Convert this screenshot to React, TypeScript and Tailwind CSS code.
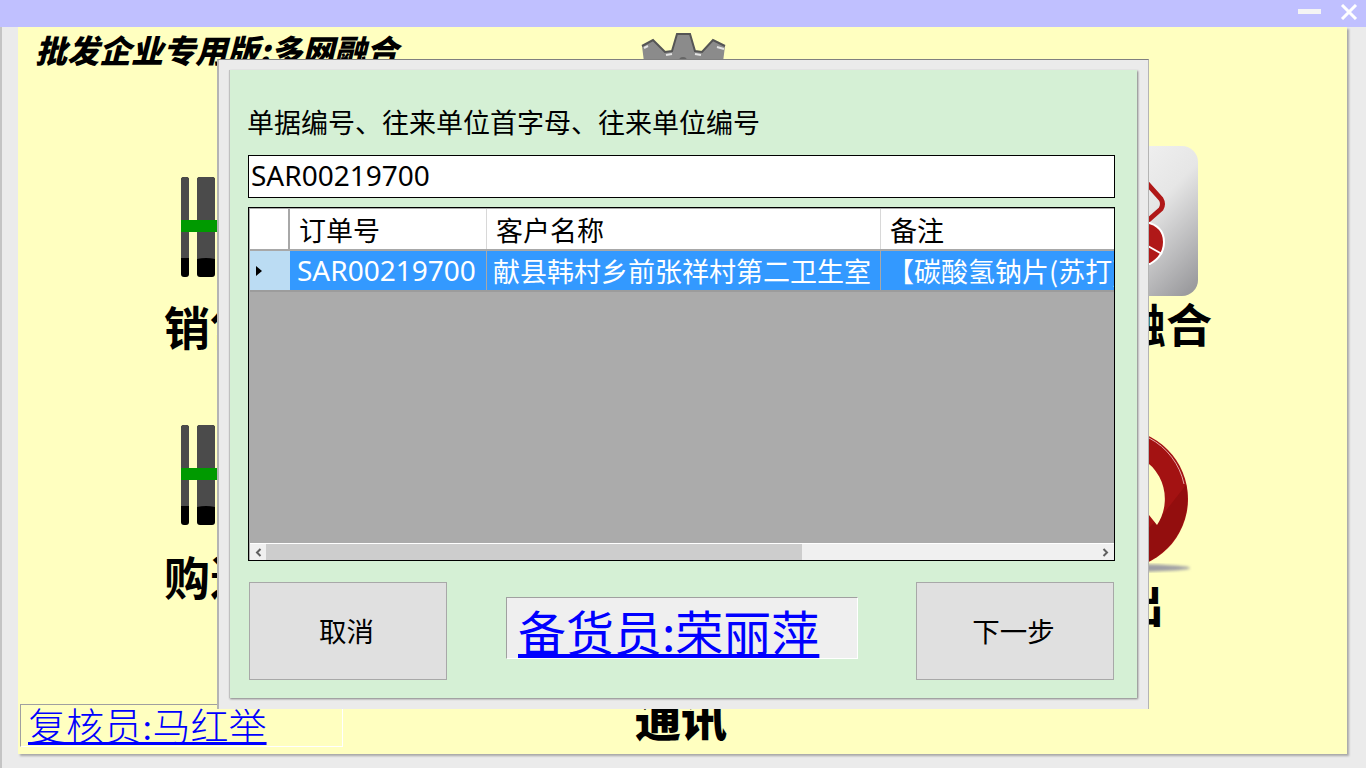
import React from "react";

const sans = { fontFamily: '"Noto Sans CJK SC", sans-serif' };
const latin = { fontFamily: '"Noto Sans", "Noto Sans CJK SC", sans-serif' };

function Bars() {
  return (
    <svg width="40" height="100" viewBox="0 0 40 100" className="block">
      <rect x="0" y="0" width="8" height="100" rx="3" fill="#000" />
      <rect x="16" y="0" width="18" height="100" rx="3" fill="#000" />
      <path d="M0 3a3 3 0 0 1 3-3h2a3 3 0 0 1 3 3v78H0z" fill="#4b4b4b" />
      <path d="M16 3a3 3 0 0 1 3-3h12a3 3 0 0 1 3 3v79q-9-2-18 0z" fill="#4b4b4b" />
      <rect x="0" y="43" width="40" height="12" fill="#009a00" />
    </svg>
  );
}

function Gear() {
  return (
    <svg width="90" height="30" viewBox="0 0 90 30" className="block">
      <path d="M2 14 L13 8 L25 20 L32 19 L37 2 L50 2 L55 19 L62 20 L73 8 L85 14 L83 30 L4 30 Z" fill="#8b8b8b" />
      <path d="M2 14 L13 8 L25 20 L32 19 L37 2 L50 2 L55 19 L62 20 L73 8 L85 14" fill="none" stroke="#555" strokeWidth="2" />
      <path d="M26 23 L32 22 M55 22 L61 23 M77 15 L84 17 M4 16 L8 14" stroke="#e4e4e4" strokeWidth="2" />
      <circle cx="43" cy="29" r="4" fill="#666" />
    </svg>
  );
}

function Tile() {
  return (
    <svg width="70" height="150" viewBox="0 0 70 150" className="block">
      <defs>
        <linearGradient id="tileG" x1="0.1" y1="0.1" x2="0.9" y2="1">
          <stop offset="0" stopColor="#f6f6f6" />
          <stop offset="0.5" stopColor="#e6e6e6" />
          <stop offset="1" stopColor="#9b9b9e" />
        </linearGradient>
      </defs>
      <rect x="-60" y="0" width="130" height="150" rx="16" fill="url(#tileG)" />
      <path d="M16 34 L33 53 Q36 58 33 63 L16 78" fill="none" stroke="#b01818" strokeWidth="5" />
      <path d="M18 76 Q36 80 36 96 Q36 110 22 118 L18 118 Z" fill="#b01818" stroke="#fff" strokeWidth="2" />
      <path d="M18 99 L34 108" stroke="#fff" strokeWidth="2" />
    </svg>
  );
}

function Ring() {
  return (
    <svg width="144" height="147" viewBox="0 0 144 147" className="block">
      <defs>
        <filter id="blurS"><feGaussianBlur stdDeviation="1.6" /></filter>
      </defs>
      <ellipse cx="72" cy="139" rx="70" ry="4" fill="#9d9da4" filter="url(#blurS)" />
      <circle cx="70" cy="70" r="70" fill="#a31212" />
      <path d="M138 56 L116 84 L60 139 A70 70 0 0 0 138 56 Z" fill="#930e0e" />
      <path d="M101 9 A68 68 0 0 1 136 55" fill="none" stroke="#e7a9a9" strokeWidth="1" />
      <path d="M70 23 A47 47 0 0 1 109 96 L101 86 L20 86 L20 23 Z" fill="#ffffc0" />
    </svg>
  );
}

export default function App() {
  return (
    <div className="relative w-[1366px] h-[768px] overflow-hidden bg-[#ebebeb]" style={sans}>
      <div className="h-[27px] bg-[#c0c0ff] flex items-center justify-end">
        <div className="w-[23px] h-[5px] bg-[#f4f4f4] mr-[19px] mb-[5px]" />
        <svg width="18" height="16" viewBox="0 0 18 16" className="mr-[8px] mb-[4px]">
          <path d="M2 1 L16 15 M16 1 L2 15" stroke="#fff" strokeWidth="3" />
        </svg>
      </div>
      <div className="absolute left-0 top-[27px] bottom-0 w-[2px] bg-[#c4c4c4]" />

      <div className="relative ml-[18px] w-[1329px] h-[727px] bg-[#ffffc0] shadow-[2px_2px_2px_#a8a8a8] flex overflow-hidden">
        <div className="w-[600px] shrink-0 flex flex-col">
          <div className="ml-[17px] text-[32px] leading-[44px] font-black italic text-black whitespace-nowrap">
            批发企业专用版:多网融合
          </div>
          <div className="ml-[163px] mt-[106px]"><Bars /></div>
          <div className="ml-[146px] mt-[20px] text-[46px] leading-[56px] font-bold text-black whitespace-nowrap">销售开单</div>
          <div className="ml-[163px] mt-[72px]"><Bars /></div>
          <div className="ml-[146px] mt-[22px] text-[46px] leading-[56px] font-bold text-black whitespace-nowrap">购进管理</div>
        </div>
        <div className="w-[200px] shrink-0 flex flex-col justify-between">
          <div className="ml-[22px] mt-[5px]"><Gear /></div>
          <div className="ml-[17px] mb-[12px] text-[46px] leading-[52px] font-black text-black whitespace-nowrap">通讯</div>
        </div>
        <div className="flex-1 flex flex-col">
          <div className="ml-[310px] mt-[119px]"><Tile /></div>
          <div className="ml-[210px] -mt-[2px] text-[46px] leading-[56px] font-bold text-black whitespace-nowrap">多网融合</div>
          <div className="ml-[230px] mt-[79px]"><Ring /></div>
          <div className="ml-[254px] mt-[1px] text-[46px] leading-[50px] font-bold text-black whitespace-nowrap">退出</div>
        </div>
        <div className="absolute left-[2px] top-[677px] w-[323px] h-[43px] border-t border-l border-t-[#a0a0a0] border-l-[#a0a0a0] border-b border-r border-b-white border-r-white pl-[7px]">
          <a href="#" className="text-[38px] leading-[44px] font-light text-[#0000ff] underline whitespace-nowrap" style={{ fontFamily: '"Liberation Serif", "Noto Sans CJK SC", serif' }}>
            复核员:马红举
          </a>
        </div>
      </div>

      {/* dialog */}
      <div className="absolute left-[217px] top-[59px] w-[932px] h-[650px] bg-[#ebebeb] border-t border-t-[#808080] border-l-2 border-l-[#b4b4b4] border-r border-r-[#b4b4b4] pl-[10px] pr-[11px] pt-[10px]">
        <div className="w-[908px] h-[628px] bg-[#d5f0d5] border-l border-l-[#c0c0c0] shadow-[1px_1px_2px_#808080] px-[18px] flex flex-col">
          <div className="mt-[32px] -ml-[1px] text-[27px] leading-[40px] text-black whitespace-nowrap">单据编号、往来单位首字母、往来单位编号</div>
          <div className="mt-[13px] h-[43px] w-[867px] bg-white border border-black pl-[2px] text-[28px] leading-[39px] text-black" style={latin}>SAR00219700</div>
          <div className="mt-[9px] h-[354px] w-[867px] bg-[#ababab] border border-black flex flex-col overflow-hidden">
            <div className="h-[42px] mt-[1px] ml-[1px] bg-white flex border-b-2 border-b-[#a8a8a8] text-[27px] leading-[42px] text-black">
              <div className="w-[40px] border-r-2 border-r-[#a8a8a8]" />
              <div className="w-[197px] border-r border-r-[#d8d8d8] pl-[9px]">订单号</div>
              <div className="w-[394px] border-r border-r-[#d8d8d8] pl-[9px]">客户名称</div>
              <div className="flex-1 pl-[9px]">备注</div>
            </div>
            <div className="h-[41px] ml-[1px] flex border-b-2 border-b-[#9c9c9c] text-[27px] leading-[39px] text-white whitespace-nowrap">
              <div className="w-[40px] bg-[#bbdcf3] flex items-center pl-[6px]">
                <svg width="6" height="10" viewBox="0 0 6 10"><path d="M0 0 L6 5 L0 10 Z" fill="#000" /></svg>
              </div>
              <div className="w-[197px] bg-[#3399ff] border-r border-r-[#a8a8a8] pl-[7px] text-[28px]" style={latin}>SAR00219700</div>
              <div className="w-[394px] bg-[#3399ff] border-r border-r-[#a8a8a8] pl-[6px] overflow-hidden">献县韩村乡前张祥村第二卫生室</div>
              <div className="flex-1 bg-[#3399ff] pl-[6px] overflow-hidden">【碳酸氢钠片(苏打)】</div>
            </div>
            <div className="flex-1" />
            <div className="h-[17px] ml-[1px] border-t border-t-white bg-[#f0f0f0] flex items-center">
              <div className="w-[16px] flex justify-center">
                <svg width="7" height="9" viewBox="0 0 7 9"><path d="M5.5 1 L2 4.5 L5.5 8" fill="none" stroke="#606060" strokeWidth="2" /></svg>
              </div>
              <div className="w-[536px] h-full bg-[#cdcdcd]" />
              <div className="flex-1 flex justify-end pr-[5px]">
                <svg width="7" height="9" viewBox="0 0 7 9"><path d="M1.5 1 L5 4.5 L1.5 8" fill="none" stroke="#606060" strokeWidth="2" /></svg>
              </div>
            </div>
          </div>
          <div className="mt-[21px] flex items-start pl-[1px]">
            <button className="w-[198px] h-[98px] bg-[#e0e0e0] border border-[#a8a8a8] pr-[3px] text-[27.5px] text-black">取消</button>
            <div className="ml-[59px] mt-[15px] w-[352px] h-[62px] bg-[#efefef] border-t border-l border-t-[#a0a0a0] border-l-[#a0a0a0] border-b border-r border-b-white border-r-white pl-[11px]">
              <a href="#" className="text-[48px] leading-[64px] text-[#0000ff] underline whitespace-nowrap">备货员:荣丽萍</a>
            </div>
            <button className="ml-[58px] w-[198px] h-[98px] bg-[#e0e0e0] border border-[#a8a8a8] pr-[3px] text-[27.5px] text-black">下一步</button>
          </div>
        </div>
      </div>
    </div>
  );
}
